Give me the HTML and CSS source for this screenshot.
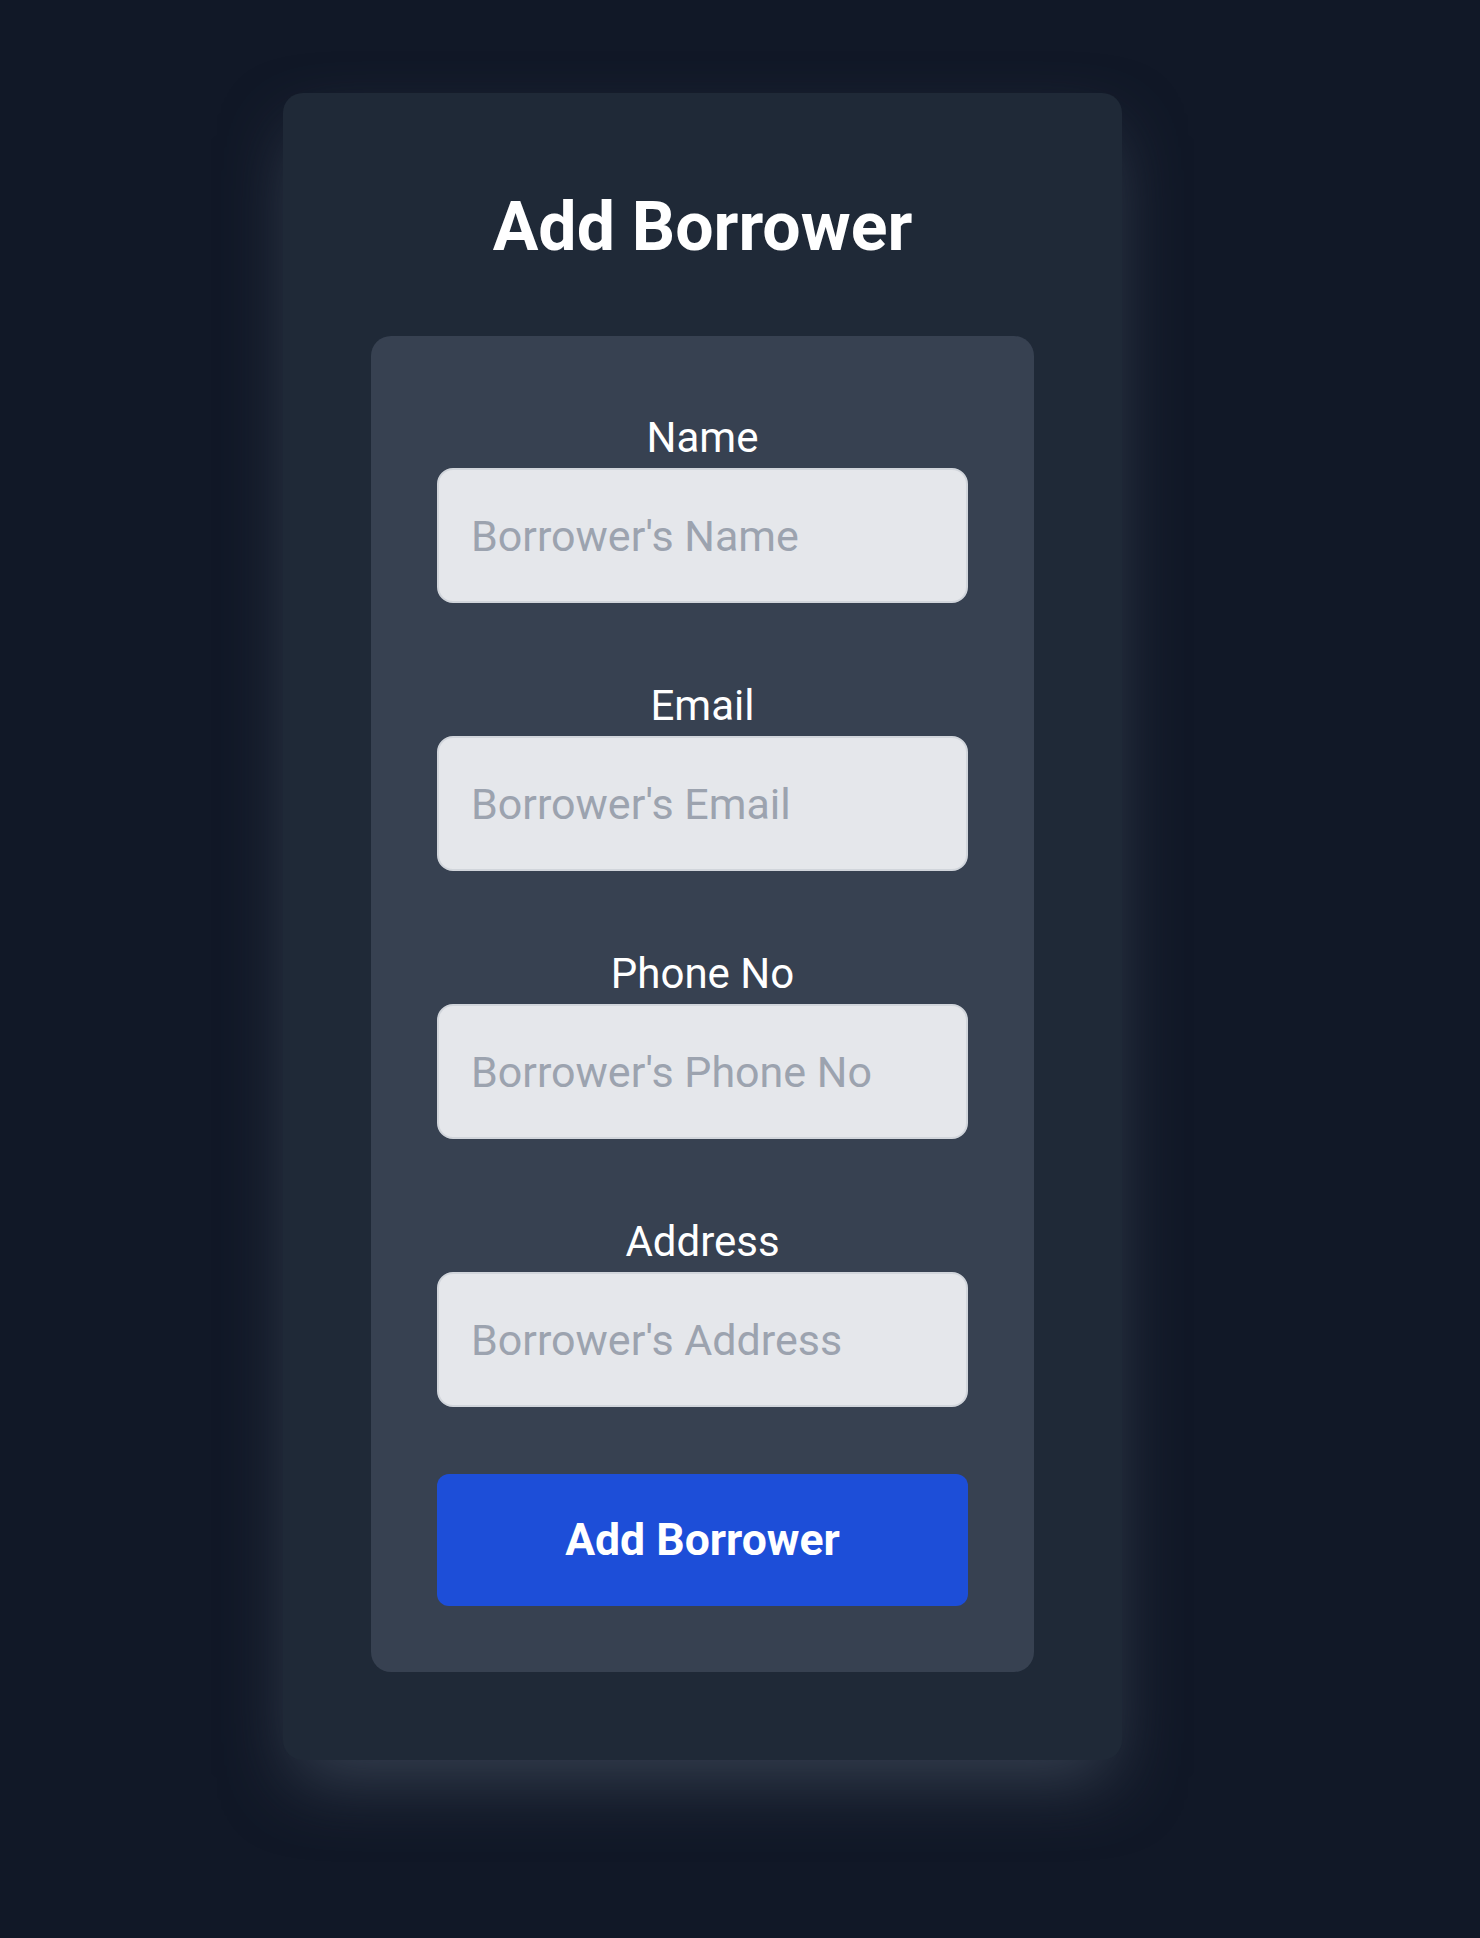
FILE: index.html
```html
<!DOCTYPE html>
<html lang="en">
<head>
<meta charset="utf-8">
<title>Add Borrower</title>
<link rel="stylesheet" href="styles.css">
</head>
<body>
<main class="page">
  <section class="card">
    <h1 class="title">Add Borrower</h1>
    <form class="form">
      <div class="field">
        <label class="label" for="name">Name</label>
        <input class="input" id="name" type="text" placeholder="Borrower's Name">
      </div>
      <div class="field">
        <label class="label" for="email">Email</label>
        <input class="input" id="email" type="email" placeholder="Borrower's Email">
      </div>
      <div class="field">
        <label class="label" for="phone">Phone No</label>
        <input class="input" id="phone" type="text" placeholder="Borrower's Phone No">
      </div>
      <div class="field">
        <label class="label" for="address">Address</label>
        <input class="input" id="address" type="text" placeholder="Borrower's Address">
      </div>
      <button class="button" type="button">Add Borrower</button>
    </form>
  </section>
</main>
</body>
</html>
```
FILE: styles.css
```css
* { box-sizing: border-box; }
html, body {
  margin: 0;
  padding: 0;
  background: #111827;
  min-height: 100%;
}
body {
  font-family: Roboto, "Liberation Sans", Arial, sans-serif;
  color: #ffffff;
}
.page {
  min-height: 1938px;
  padding: 93px 0 0 283px;
  display: flex;
  align-items: flex-start;
}
.card {
  width: 839px;
  background: #1f2937;
  border-radius: 20px;
  padding: 101px 88px 88px;
  box-shadow: 0 30px 70px -12px rgb(55, 65, 81);
  display: flex;
  flex-direction: column;
}
.title {
  margin: 0 0 75px;
  font-size: 68px;
  line-height: 67px;
  font-weight: 700;
  text-align: center;
  color: #ffffff;
}
.form {
  background: #374151;
  border-radius: 20px;
  padding: 77px 66px 66px;
  display: flex;
  flex-direction: column;
}
.field {
  display: flex;
  flex-direction: column;
  margin-bottom: 78px;
}
.field:last-of-type {
  margin-bottom: 67px;
}
.label {
  font-size: 42px;
  line-height: 50px;
  text-align: center;
  margin-bottom: 5px;
  color: #ffffff;
}
.input {
  height: 135px;
  width: 100%;
  background: #e5e7eb;
  border: 2px solid #d1d5db;
  border-radius: 16px;
  padding: 0 32px;
  font-family: Roboto, "Liberation Sans", Arial, sans-serif;
  font-size: 43px;
  color: #111827;
  outline: none;
}
.input::placeholder {
  color: #9ca3af;
  opacity: 1;
}
.button {
  height: 132px;
  width: 100%;
  background: #1d4ed8;
  border: none;
  border-radius: 12px;
  color: #ffffff;
  font-family: Roboto, "Liberation Sans", Arial, sans-serif;
  font-size: 44.5px;
  font-weight: 700;
  cursor: pointer;
}
```
